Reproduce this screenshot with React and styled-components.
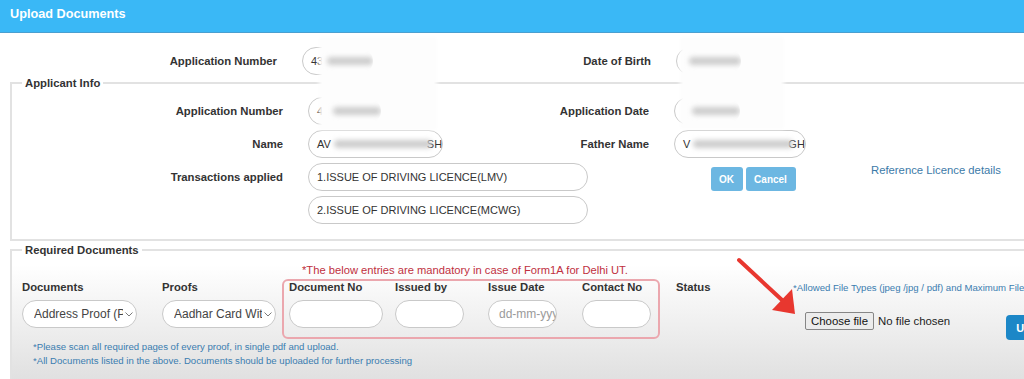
import React from 'react';
import styled, { createGlobalStyle } from 'styled-components';

const GlobalStyle = createGlobalStyle`
  html, body { margin: 0; padding: 0; background: #fff; overflow: hidden; }
  body { font-family: "Liberation Sans", Arial, sans-serif; color: #333; }
  * { box-sizing: border-box; }
`;

const FONT = `"Liberation Sans", Arial, sans-serif`;

const Page = styled.div`
  position: relative;
  width: 1100px;
  height: 379px;
  overflow: hidden;
`;

const Header = styled.header`
  height: 33px;
  background: #3ab8f6;
  border-bottom: 1px solid #4a9fd0;
  padding: 6px 10px 0;
  color: #fff;
  font-weight: bold;
  font-size: 12.7px;
  line-height: 16px;
`;

const TopGrid = styled.div`
  display: grid;
  grid-template-columns: 277px 162px 162px 162px;
  column-gap: 25px;
  margin-top: 14px;
  align-items: center;
`;

const Label = styled.label`
  font-weight: bold;
  font-size: 11.3px;
  line-height: 14px;
  color: #333;
  text-align: ${p => (p.$left ? 'left' : 'right')};
  white-space: nowrap;
`;

const Pill = styled.div`
  height: 28px;
  width: ${p => (p.$w ? `${p.$w}px` : 'auto')};
  border: 1px solid #c9c9c9;
  border-radius: 14px;
  background: #fff;
  display: flex;
  align-items: center;
  padding-left: ${p => p.$pad ?? 8}px;
  font-size: ${p => p.$fs ?? 11}px;
  color: ${p => p.$muted ? '#9a9a9a' : '#333'};
  white-space: nowrap;
  overflow: hidden;
  justify-self: start;
  grid-column: ${p => p.$span || 'auto'};
`;

const Blob = styled.span`
  position: relative;
  z-index: 2;
  display: inline-block;
  width: ${p => p.$w}px;
  height: 8px;
  margin-left: ${p => p.$ml ?? 2}px;
  margin-right: ${p => p.$mr ?? 0}px;
  background: #cdcdcd;
  border-radius: 4px;
  filter: blur(2.5px);
`;

const Redact = styled.div`
  position: absolute;
  left: ${p => p.$x}px;
  top: ${p => p.$y}px;
  width: ${p => p.$w}px;
  height: ${p => p.$h}px;
  background: #fdfdfd;
  box-shadow: 0 0 4px 3px #fdfdfd;
  z-index: 1;
  pointer-events: none;
`;

const Fieldset = styled.fieldset`
  margin: ${p => p.$mt}px 0 0 10px;
  border: 2px solid #e2e2e2;
  padding: ${p => p.$pt}px 0 ${p => p.$pb}px 10px;
  min-width: 0;
  background: ${p => p.$shade ? 'linear-gradient(#ffffff 10%, #dedede)' : 'transparent'};
`;

const Legend = styled.legend`
  padding: 0 3px;
  font-weight: bold;
  font-size: 11.3px;
  line-height: 14px;
  color: #333;
`;

const InfoGrid = styled.div`
  display: grid;
  grid-template-columns: 261px 158px 158px 158px 180px;
  grid-auto-rows: 28px;
  row-gap: 5px;
  column-gap: 25px;
  align-items: center;
`;

const ButtonPair = styled.div`
  display: flex;
  gap: 3px;
  grid-column: 4;
  justify-self: center;
  align-self: end;
`;

const SmallBtn = styled.button`
  width: ${p => p.$w}px;
  height: 24px;
  padding: 0;
  background: #6cb7e2;
  border: none;
  border-radius: 3px;
  color: #fff;
  font: bold 10px ${FONT};
`;

const RefLink = styled.a`
  align-self: start;
  padding-left: 14px;
  font-size: 11.3px;
  line-height: 14px;
  color: #3c7aa8;
  text-decoration: none;
  white-space: nowrap;
`;

const DocsRow = styled.div`
  display: flex;
  align-items: flex-start;
  margin-top: 6px;
`;

const Col = styled.div`
  display: flex;
  flex-direction: column;
  gap: 6px;
  width: ${p => p.$w}px;
  margin-top: ${p => p.$mt ?? 0}px;
  margin-right: ${p => p.$mr ?? 0}px;
  margin-left: ${p => p.$ml ?? 0}px;
  flex: none;

  & > label { line-height: 13px; }
`;

const Group = styled.div`
  display: flex;
  flex-direction: column;
  flex: none;
`;

const Notice = styled.div`
  margin: 0 0 2px 20px;
  font-size: 11.2px;
  line-height: 14px;
  color: #c0303e;
  white-space: nowrap;
`;

const RedBox = styled.div`
  display: flex;
  border: 2px solid #eba7ae;
  border-radius: 6px;
  padding: 0 7px 9px 5px;
`;

const SelectText = styled.span`
  flex: 1;
  overflow: hidden;
  white-space: nowrap;
  font-size: 12px;
  color: #444;
`;

const Chevron = styled.svg`
  flex: none;
  margin: 0 3px 0 2px;
`;

const Select = ({ children }) => (
  <Pill $pad={11}>
    <SelectText>{children}</SelectText>
    <Chevron width="8" height="5" viewBox="0 0 8 5">
      <path d="M0.5 0.5 L4 4 L7.5 0.5" fill="none" stroke="#7a7a7a" strokeWidth="1" />
    </Chevron>
  </Pill>
);

const FileCol = styled.div`
  display: flex;
  flex-direction: column;
  margin-top: 18px;
  flex: none;
`;

const Allowed = styled.div`
  font-size: 9.6px;
  line-height: 13px;
  color: #3b7db0;
  white-space: nowrap;
`;

const ChooseRow = styled.div`
  display: flex;
  align-items: flex-start;
  margin: 18px 0 0 12px;
`;

const ChooseBtn = styled.button`
  height: 18px;
  padding: 0 5px;
  background: #ececec;
  border: 1px solid #868686;
  border-radius: 2px;
  color: #111;
  font: 11.4px ${FONT};
  line-height: 16px;
`;

const NoFile = styled.span`
  margin-left: 4px;
  font-size: 11.4px;
  line-height: 18px;
  color: #222;
  white-space: nowrap;
`;

const UploadBtn = styled.button`
  height: 25px;
  margin: 3px 0 0 56px;
  padding: 0 10px;
  background: #1c87c7;
  border: none;
  border-radius: 4px;
  color: #fff;
  font: bold 11px ${FONT};
`;

const Notes = styled.div`
  margin-left: 11px;
  font-size: 9.6px;
  line-height: 14px;
  color: #3b7db0;
  white-space: nowrap;
`;

const Arrow = styled.svg`
  position: absolute;
  left: 730px;
  top: 250px;
  pointer-events: none;
  z-index: 3;
`;

export default function App() {
  return (
    <>
      <GlobalStyle />
      <Page>
        <Header>Upload Documents</Header>

        <TopGrid>
          <Label>Application Number</Label>
          <Pill>43<Blob $w={46} $ml={4} /></Pill>
          <Label>Date of Birth</Label>
          <Pill><Blob $w={52} $ml={4} /></Pill>
        </TopGrid>

        <Fieldset $mt={1} $pt={7} $pb={15}>
          <Legend>Applicant Info</Legend>
          <InfoGrid>
            <Label>Application Number</Label>
            <Pill>43<Blob $w={48} $ml={4} /></Pill>
            <Label>Application Date</Label>
            <Pill>2<Blob $w={48} $ml={3} /></Pill>
            <span />

            <Label>Name</Label>
            <Pill>AV<Blob $w={98} $ml={3} $mr={-5} />SH</Pill>
            <Label>Father Name</Label>
            <Pill>V<Blob $w={100} $ml={3} $mr={-5} />GH</Pill>
            <span />

            <Label>Transactions applied</Label>
            <Pill $w={280} $span="2 / span 2">1.ISSUE OF DRIVING LICENCE(LMV)</Pill>
            <ButtonPair>
              <SmallBtn $w={32}>OK</SmallBtn>
              <SmallBtn $w={50}>Cancel</SmallBtn>
            </ButtonPair>
            <RefLink href="#">Reference Licence details</RefLink>

            <Pill $w={280} $span="2 / span 2">2.ISSUE OF DRIVING LICENCE(MCWG)</Pill>
          </InfoGrid>
        </Fieldset>

        <Fieldset $mt={2} $pt={0} $pb={20} $shade>
          <Legend>Required Documents</Legend>
          <DocsRow>
            <Col $w={115} $mt={18} $mr={25}>
              <Label $left>Documents</Label>
              <Select>Address Proof (Permanent)</Select>
            </Col>
            <Col $w={114} $mt={18} $mr={6}>
              <Label $left>Proofs</Label>
              <Select>Aadhar Card With QR Code</Select>
            </Col>
            <Group>
              <Notice>*The below entries are mandatory in case of Form1A for Delhi UT.</Notice>
              <RedBox>
                <Col $w={94} $mr={12}>
                  <Label $left>Document No</Label>
                  <Pill />
                </Col>
                <Col $w={69} $mr={24}>
                  <Label $left>Issued by</Label>
                  <Pill />
                </Col>
                <Col $w={69} $mr={25}>
                  <Label $left>Issue Date</Label>
                  <Pill $pad={10} $fs={12} $muted>dd-mm-yyyy</Pill>
                </Col>
                <Col $w={69}>
                  <Label $left>Contact No</Label>
                  <Pill />
                </Col>
              </RedBox>
            </Group>
            <Col $w={117} $mt={18} $ml={16}>
              <Label $left>Status</Label>
            </Col>
            <FileCol>
              <Allowed>*Allowed File Types (jpeg /jpg / pdf) and Maximum File Size 200 KB</Allowed>
              <ChooseRow>
                <ChooseBtn>Choose file</ChooseBtn>
                <NoFile>No file chosen</NoFile>
                <UploadBtn>Upload</UploadBtn>
              </ChooseRow>
            </FileCol>
          </DocsRow>
          <Notes>
            <div>*Please scan all required pages of every proof, in single pdf and upload.</div>
            <div>*All Documents listed in the above. Documents should be uploaded for further processing</div>
          </Notes>
        </Fieldset>

        <Redact $x={322} $y={40} $w={112} $h={87} />
        <Redact $x={683} $y={40} $w={98} $h={86} />

        <Arrow width="80" height="70" viewBox="0 0 80 70">
          <line x1="9" y1="10" x2="52" y2="50" stroke="#e8372f" strokeWidth="4" strokeLinecap="round" />
          <polygon points="65,64 42,60 62,39" fill="#e8372f" />
        </Arrow>
      </Page>
    </>
  );
}
